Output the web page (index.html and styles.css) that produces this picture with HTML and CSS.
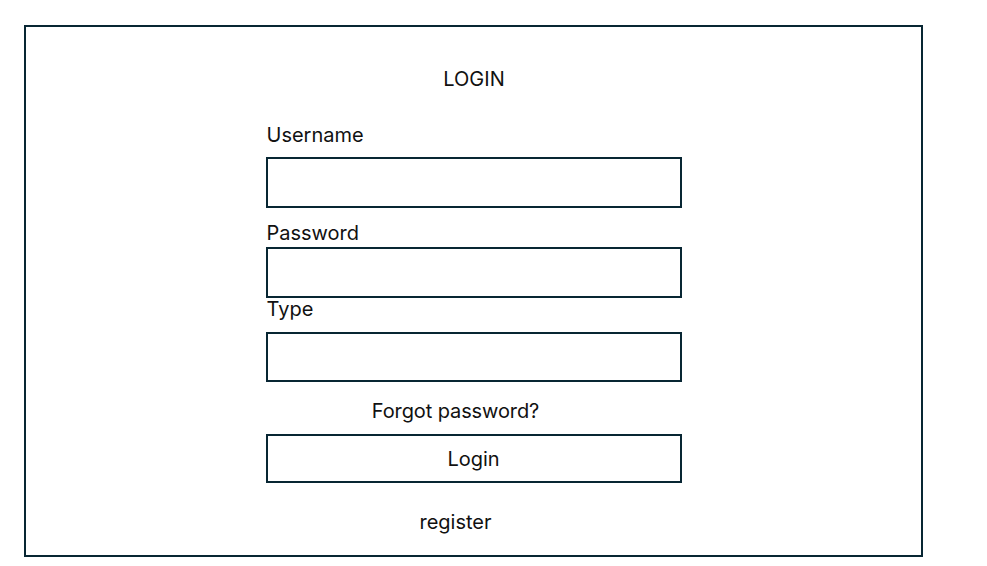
FILE: index.html
```html
<!DOCTYPE html>
<html lang="en">
<head>
  <meta charset="UTF-8">
  <meta name="viewport" content="width=device-width, initial-scale=1.0">
  <title>Login</title>
  <link rel="stylesheet" href="styles.css">
</head>
<body>
  <div class="login-box">
    <div class="title">LOGIN</div>

    <form class="login-form">
      <label for="username" class="field-label">Username</label>
      <input type="text" id="username" class="field">

      <label for="password" class="field-label pass">Password</label>
      <input type="password" id="password" class="field flush">

      <label for="type" class="field-label type">Type</label>
      <input type="text" id="type" class="field short">

      <a href="#" class="forgot">Forgot password?</a>

      <button type="button" class="login-btn">Login</button>

      <a href="#" class="register">register</a>
    </form>
  </div>
</body>
</html>
```

FILE: styles.css
```css
body {
    margin: 0;
    background: #ffffff;
    font-family: Inter, "Noto Sans", sans-serif;
    color: #111111;
}

.login-box {
    box-sizing: border-box;
    width: 899px;
    height: 532px;
    margin: 25px 0 0 24px;
    border: 2px solid #082633;
    display: flex;
    flex-direction: column;
    align-items: center;
}

.title {
    font-size: 20px;
    line-height: 22px;
    margin-top: 41px;
    margin-left: 1px;
}

.login-form {
    width: 416px;
    display: flex;
    flex-direction: column;
    margin-top: 34px;
}

.field-label {
    font-size: 20px;
    line-height: 22px;
    margin-left: 1px;
    margin-bottom: 11px;
}
.field-label.pass {
    margin-bottom: 3px;
}
.field-label.type {
    margin-bottom: 12px;
}

.field {
    box-sizing: border-box;
    height: 51px;
    border: 2px solid #082633;
    border-radius: 0;
    padding: 0 10px;
    font-family: inherit;
    font-size: 16px;
    outline: none;
    margin: 0 0 14px 0;
}
.field.flush {
    margin-bottom: 0;
}
.field.short {
    height: 50px;
    margin-bottom: 18px;
}

.forgot,
.register {
    display: block;
    text-align: center;
    padding-right: 36px;
    font-size: 20px;
    line-height: 22px;
    color: #111111;
    text-decoration: none;
}
.forgot {
    letter-spacing: -0.1px;
}

.login-btn {
    box-sizing: border-box;
    height: 49px;
    margin-top: 12px;
    border: 2px solid #082633;
    background: #ffffff;
    font-family: inherit;
    font-size: 20px;
    color: #111111;
    cursor: pointer;
}

.register {
    margin-top: 28px;
}
```
